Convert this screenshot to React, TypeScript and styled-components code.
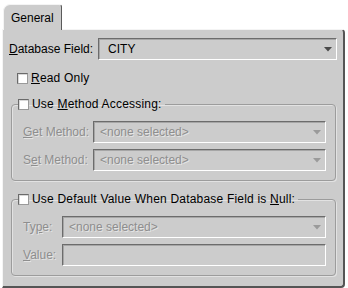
import React from "react";
import styled, { createGlobalStyle } from "styled-components";

const GlobalStyle = createGlobalStyle`
  body {
    margin: 0;
    background: #ffffff;
    font-family: "Liberation Sans", Arial, sans-serif;
    font-size: 12px;
  }
`;

const Frame = styled.div`
  width: 343px;
  padding: 4px 0 0 2px;
`;

const TabStrip = styled.div`
  display: flex;
  padding-left: 1px;
`;

const Tab = styled.div`
  width: 50px;
  height: 25px;
  padding-left: 7px;
  display: flex;
  align-items: center;
  background: #cccccc;
  color: #000;
  border-top: 1px solid #f4f4f4;
  border-left: 1px solid #f4f4f4;
  border-right: 1px solid #5a5a5a;
  border-radius: 7px 3px 0 0;
  position: relative;
  z-index: 1;
  margin-bottom: -1px;
`;

const Panel = styled.div`
  height: 248px;
  background: #cccccc;
  border-top: 1px solid #f4f4f4;
  border-left: 1px solid #f4f4f4;
  border-right: 2px solid #555555;
  border-bottom: 2px solid #555555;
  border-radius: 0 4px 4px 0;
  padding: 8px 6px 0 6px;
  display: flex;
  flex-direction: column;
`;

const Row = styled.div<{ $gap?: number }>`
  display: flex;
  align-items: center;
  gap: ${(p) => p.$gap ?? 4}px;
`;

const Label = styled.span<{ $width?: number; $disabled?: boolean }>`
  width: ${(p) => (p.$width ? `${p.$width}px` : "auto")};
  flex-shrink: 0;
  color: ${(p) => (p.$disabled ? "#8e8e8e" : "#000")};
  text-shadow: ${(p) => (p.$disabled ? "1px 1px 0 #e4e4e4" : "none")};
  white-space: nowrap;
`;

const Combo = styled.div<{ $disabled?: boolean; $left?: number }>`
  flex: 1;
  height: 20px;
  display: flex;
  align-items: center;
  padding: 0 4px 0 ${(p) => p.$left ?? 6}px;
  background: #cccccc;
  border-top: 1px solid #6c6c6c;
  border-left: 1px solid #6c6c6c;
  border-right: 1px solid #ffffff;
  border-bottom: 1px solid #ffffff;
  box-shadow: inset 1px 1px 0 #a6a6a6;
  color: ${(p) => (p.$disabled ? "#8e8e8e" : "#000")};
  text-shadow: ${(p) => (p.$disabled ? "1px 1px 0 #e4e4e4" : "none")};
`;

const ComboText = styled.span`
  flex: 1;
  white-space: nowrap;
`;

const Arrow = ({ disabled }: { disabled?: boolean }) => (
  <svg width="8" height="5" viewBox="0 0 8 5">
    <polygon points="0,0 8,0 4,4.5" fill={disabled ? "#9a9a9a" : "#4a4a4a"} />
  </svg>
);

const Field = styled.div`
  flex: 1;
  height: 20px;
  background: #cccccc;
  border-top: 1px solid #6c6c6c;
  border-left: 1px solid #6c6c6c;
  border-right: 1px solid #ffffff;
  border-bottom: 1px solid #ffffff;
  box-shadow: inset 1px 1px 0 #a6a6a6;
`;

const CheckRow = styled.label`
  display: flex;
  align-items: center;
  gap: 3px;
  color: #000;
  letter-spacing: 0.2px;
`;

const Box = styled.span`
  width: 9px;
  height: 9px;
  background: #ffffff;
  border-top: 1px solid #6a6a6a;
  border-left: 1px solid #6a6a6a;
  border-right: 1px solid #9a9a9a;
  border-bottom: 1px solid #9a9a9a;
  box-shadow: inset 1px 1px 0 #d8d8d8;
`;

const Spacer = styled.div<{ $top: number; $left?: number }>`
  margin: ${(p) => p.$top}px 0 0 ${(p) => p.$left ?? 0}px;
`;

const Group = styled.fieldset`
  margin: 0 0 0 2px;
  width: 325px;
  box-sizing: border-box;
  border: 1px solid #9c9c9c;
  border-radius: 4px;
  box-shadow: 1px 1px 0 #e2e2e2, inset 1px 1px 0 #e2e2e2;
  padding: 10px 9px 9px 11px;
  display: flex;
  flex-direction: column;
  gap: 6px;
`;

const Legend = styled.legend`
  padding: 0 3px 0 0;
  margin-left: -5px;
  line-height: 13px;
`;

const U = styled.span`
  text-decoration: underline;
`;

const Check = ({ children }: { children: React.ReactNode }) => (
  <CheckRow>
    <Box />
    <span>{children}</span>
  </CheckRow>
);

export default function App() {
  return (
    <>
      <GlobalStyle />
      <Frame>
        <TabStrip>
          <Tab>General</Tab>
        </TabStrip>
        <Panel>
          <Row $gap={5}>
            <Label>
              <U>D</U>atabase Field:
            </Label>
            <Combo $left={9}>
              <ComboText>CITY</ComboText>
              <Arrow />
            </Combo>
          </Row>
          <Spacer $top={11} $left={8}>
            <Check>
              <U>R</U>ead Only
            </Check>
          </Spacer>
          <Spacer $top={13}>
            <Group>
              <Legend>
                <Check>
                  Use <U>M</U>ethod Accessing:
                </Check>
              </Legend>
              <Row $gap={5}>
                <Label $width={65} $disabled>
                  <U>G</U>et Method:
                </Label>
                <Combo $disabled>
                  <ComboText>&lt;none selected&gt;</ComboText>
                  <Arrow disabled />
                </Combo>
              </Row>
              <Row $gap={5}>
                <Label $width={65} $disabled>
                  S<U>e</U>t Method:
                </Label>
                <Combo $disabled>
                  <ComboText>&lt;none selected&gt;</ComboText>
                  <Arrow disabled />
                </Combo>
              </Row>
            </Group>
          </Spacer>
          <Spacer $top={12}>
            <Group>
              <Legend>
                <Check>
                  Use Default Value When Database Field is <U>N</U>ull:
                </Check>
              </Legend>
              <Row $gap={5}>
                <Label $width={34} $disabled>
                  Ty<U>p</U>e:
                </Label>
                <Combo $disabled>
                  <ComboText>&lt;none selected&gt;</ComboText>
                  <Arrow disabled />
                </Combo>
              </Row>
              <Row $gap={5}>
                <Label $width={34} $disabled>
                  <U>V</U>alue:
                </Label>
                <Field />
              </Row>
            </Group>
          </Spacer>
        </Panel>
      </Frame>
    </>
  );
}
